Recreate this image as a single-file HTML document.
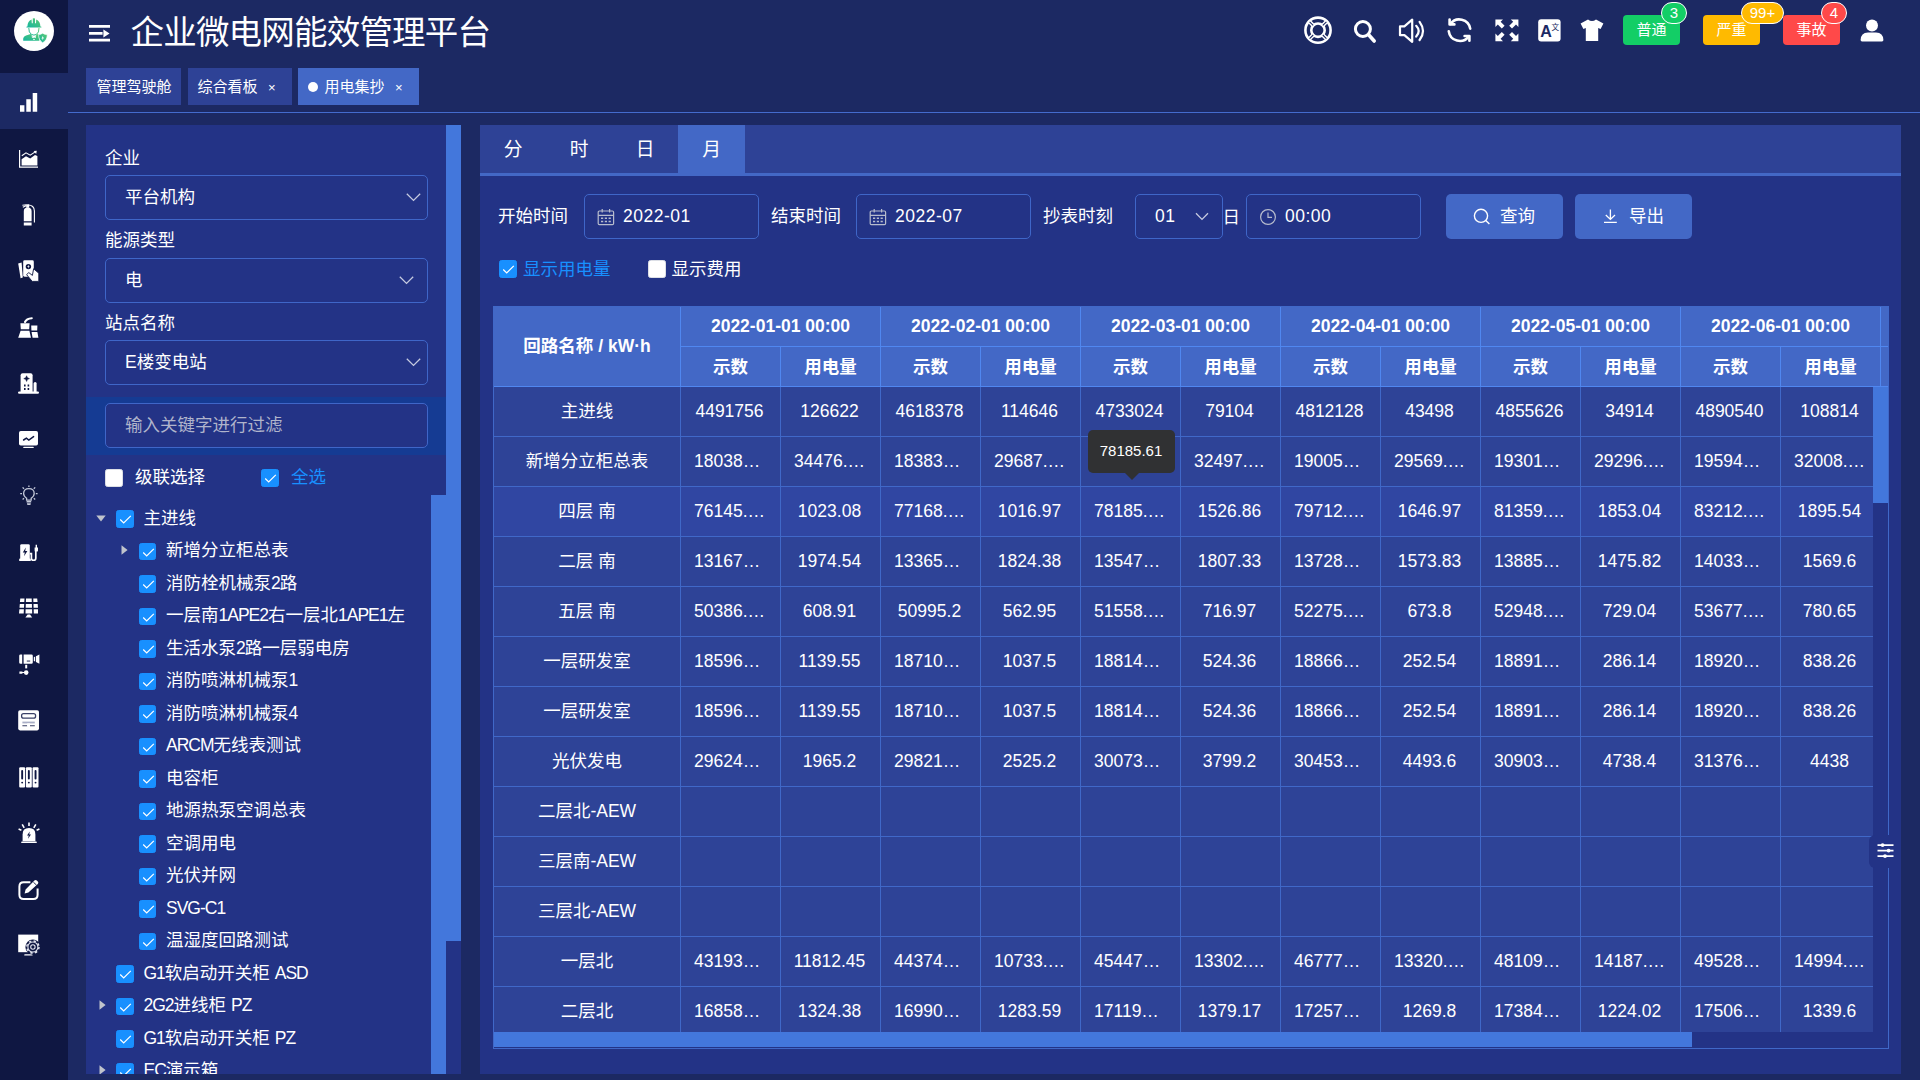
<!DOCTYPE html>
<html lang="zh-CN"><head><meta charset="utf-8"><title>企业微电网能效管理平台</title>
<style>
*{box-sizing:border-box}
html,body{margin:0;padding:0}
body{width:1920px;height:1080px;overflow:hidden;position:relative;background:#1c2963;color:#fff;
 font-family:"Liberation Sans","Noto Sans CJK SC",sans-serif;font-size:17.5px}
svg{display:block}
.sidebar{position:absolute;left:0;top:0;width:68px;height:1080px;background:#0f1742;z-index:5}
.sidebar>svg{position:absolute}
.logo{position:absolute;left:0;top:0;width:68px;height:73px;background:#0f1742}
.logo-c{position:absolute;left:14px;top:11px;width:40px;height:40px;border-radius:50%;background:#fff;overflow:hidden}
.side-act{position:absolute;left:0;top:73px;width:68px;height:56px;background:#1c2963}
.header{position:absolute;left:0;top:0;width:1920px;height:68px}
.header>svg{position:absolute}
.title{position:absolute;left:130.5px;top:1.5px;height:62px;line-height:62px;font-size:33.5px;letter-spacing:-0.8px;white-space:nowrap}
.abtn{position:absolute;top:15px;width:57px;height:30px;border-radius:4px;font-size:15px;line-height:30px;text-align:center;color:#fff}
.badge{position:absolute;top:2px;height:22px;border-radius:11px;border:1px solid #fff;font-size:15px;line-height:20px;text-align:center;color:#fff}
.tags{position:absolute;left:0;top:0;width:1920px;height:114px}
.tag{position:absolute;top:68px;height:37px;background:#2e4296;font-size:15px;line-height:37px;white-space:nowrap}
.tag.on{background:#4368c6}
.tag span{position:absolute;top:0;line-height:38.5px}
.tag i{position:absolute;top:0;font-style:normal;font-size:13px;line-height:40px}
.tag b{position:absolute;left:10px;top:14px;width:10px;height:10px;border-radius:50%;background:#fff}
.tagline{position:absolute;left:68px;top:112px;width:1852px;height:1px;background:#446bcd}

.lp{position:absolute;left:86px;top:125px;width:375px;height:949px;background:#233386;overflow:hidden}
.lbl{position:absolute;left:19px;height:20px;line-height:20px;font-size:17.5px;white-space:nowrap}
.sel{position:absolute;left:19px;width:323px;height:45px;border:1px solid #3f66c8;border-radius:5px;line-height:43px;font-size:17.5px}
.sel span{position:absolute;left:19px;top:0;white-space:nowrap}
.arr{position:absolute;top:17px}
.fband{position:absolute;left:0;top:272px;width:360px;height:58px;background:#153b93}
.finput{position:absolute;left:19px;top:6px;width:323px;height:45px;border:1px solid #3f66c8;border-radius:5px;background:#233386;line-height:43px;padding-left:19px;color:#b0b4cb;font-size:17.5px;white-space:nowrap}
.cb{position:absolute;width:17.5px;height:17.5px;border-radius:2.5px;background:#fff;border:1px solid #dcdfe6;overflow:hidden}
.cb.on{background:#1890ff;border-color:#1890ff}
.cb svg{position:absolute;left:-1px;top:-1px}
.cbl{position:absolute;height:30px;line-height:30px;font-size:17.5px;white-space:nowrap}
.blue{color:#1890ff}
.tree{position:absolute;left:0;top:377.5px;width:345px}
.tn{position:absolute;left:0;width:345px;height:32.5px;line-height:32.5px;font-size:17.5px;white-space:nowrap}
.tn span{position:absolute;top:-1px}
.tn span u{text-decoration:none;letter-spacing:-1px}
.ta{position:absolute;top:12px}
svg.ta[width="7"]{top:9.5px}
.isb{position:absolute;left:345px;top:370px;width:15px;height:579px;background:#4377dc}
.osb{position:absolute;left:360px;top:0;width:15px;height:816px;background:#4377dc}
.osbt{position:absolute;left:446px;top:941px;width:15px;height:133px;background:#233386}

.mp{position:absolute;left:480px;top:125px;width:1421px;height:949px;background:#233386}
.ttabs{position:absolute;left:0;top:0;width:1421px;height:51px;background:#2e4296;border-bottom:3px solid #4368c6}
.tt{position:absolute;top:0;height:48px;line-height:50px;text-align:center;font-size:18.75px}
.tt.on{background:#4368c6}
.flbl{position:absolute;top:69px;height:45px;line-height:45px;font-size:17.5px;white-space:nowrap}
.inp{position:absolute;top:69px;height:45px;border:1px solid #3f66c8;border-radius:5px;line-height:43px;font-size:17.5px}
.inp span{position:absolute;top:0;white-space:nowrap;letter-spacing:.5px}
.inp>svg.ic{position:absolute;left:12px;top:12.5px}
.btn{position:absolute;top:69px;width:117px;height:45px;border-radius:5px;background:#4368c6;line-height:45px;font-size:17.5px}
.btn span{position:absolute;top:0}
.btn svg{position:absolute}

.tbl{position:absolute;left:13px;top:181px;width:1396px;height:743px;border:1px solid #4068c8;overflow:hidden}
.thead{position:absolute;left:0;top:0;width:1600px;height:80px;background:#4368c6}
.th{font-weight:bold;font-size:17.5px;text-align:center;white-space:nowrap;border-right:1px solid #5087f0;border-bottom:1px solid #5087f0;overflow:hidden}
.h0{position:absolute;left:0;top:0;width:187px;height:80px;line-height:78px}
.thg{position:absolute;top:0;width:200px;height:80px}
.h1{width:200px;height:40px;line-height:38px}
.h2{float:left;width:100px;height:40px;line-height:40px}
.tbody{position:absolute;left:0;top:80px;width:1379px;height:645px;overflow:hidden;background:#2e4397}
.tr{width:1600px;height:50px;background:#2e4397}
.tr.hov{background:#3046a2}
.td{float:left;width:100px;height:50px;line-height:48px;text-align:center;white-space:nowrap;overflow:hidden;border-right:1px solid #4068c8;border-bottom:1px solid #4068c8;font-size:17.5px;padding:0 13px 0 11px}
.td.t{padding:0 12px 0 13px}
.td.t{text-align:left}
.td.c0{width:187px;padding:0 12px}
.vsb{position:absolute;left:1379px;top:80px;width:15px;height:660px;background:#233386}
.vsb div{width:15px;height:116px;background:#4377dc}
.hsb{position:absolute;left:0;top:725px;width:1379px;height:15px;background:#233386}
.hsb div{width:1199px;height:15px;background:#4377dc;margin-left:-1px}
.tip{position:absolute;left:608px;top:305px;width:87px;height:43px;border-radius:5px;background:#303133;font-size:15px;line-height:42px;text-align:center;color:#fff;text-indent:-1px}
.tip i{position:absolute;left:36.5px;top:43px;width:0;height:0;border:7.5px solid transparent;border-top-color:#303133;border-bottom-width:0}
.setbtn{position:absolute;left:1389px;top:710px;width:32px;height:33px;border-radius:6px 0 0 6px;background:#233386}
.setbtn svg{position:absolute;left:7.5px;top:8px}

</style></head><body>
<div class="sidebar">
<div class="logo"><div class="logo-c"><svg width="40" height="40" viewBox="0 0 40 40"><defs><linearGradient id="lg" x1="0" y1="1" x2="1" y2="0"><stop offset="0" stop-color="#12b5a0"/><stop offset="1" stop-color="#5fca72"/></linearGradient></defs><path fill="url(#lg)" d="M13.4 15.6Q13.6 10.2 17.6 8.6L17.8 12.2H18.8V7.6Q19.8 7 21 7.6V12.2H22L22.2 8.6Q26.2 10.2 26.4 15.6L27.4 15.8V16.6H12.4V15.8z"/><path fill="none" stroke="url(#lg)" stroke-width="1" d="M14.8 17Q14.6 21.6 17.4 23.4Q19.9 24.8 22.4 23.4Q25.2 21.6 25 17"/><path fill="url(#lg)" d="M9.2 29.8V27.6Q9.4 25.4 12 24.6L16.8 23L19.9 27.6L23 23L25.4 23.8V29.8z"/><path fill="#fff" d="M17.6 24.2L19.2 26.4L18 27zM22.2 24.2L20.6 26.4L21.8 27zM19 28.2h2v0.8h-2z"/><path fill="url(#lg)" stroke="#fff" stroke-width="0.7" d="M28.6 22.2Q30.8 23.6 33.2 23.4Q33.6 29 28.6 31.8Q24.4 29 24.6 23.4Q26.8 23.6 28.6 22.2z"/><path fill="#fff" d="M29.2 24.4L27.4 27.4H28.6L28.2 29.4L30 26.4H28.8z"/></svg></div></div>
<div class="side-act"></div>
<svg style="left:20px;top:93px" width="18" height="19" viewBox="0 0 18 19" ><path fill="#fff" d="M0 12.2h4.4v6.6H0zM6.3 6.2h4.5v12.6H6.3zM12.7 0h4.5v18.8h-4.5z"/></svg>
<svg style="left:19px;top:150px" width="19" height="18" viewBox="0 0 19 18" ><path d="M0.6 0V17.1H19" fill="none" stroke="#fff" stroke-width="1.2"/><path d="M2.6 15.6V9.2L7 6.2l4.2 2.3 4.8-3.4 2.4 0.8v9.7z" fill="#fff"/><path d="M2.8 5.8L7 2.8l4.2 2.4 5.4-3.6" fill="none" stroke="#fff" stroke-width="1.1"/><path d="M14.6 0.9l3.2-0.2-0.6 3.2z" fill="#fff"/></svg>
<svg style="left:22px;top:203.5px" width="14" height="22" viewBox="0 0 14 22" ><path d="M1.8 7.2Q1.8 3.6 5.6 3.6Q9.6 3.6 9.6 7.2V17.2H1.8zM1.8 18.4H9.6V21.4H1.8z" fill="#fff"/><path d="M0.4 1.2L4.6 0.8M0.8 3.2L4.6 1.4M5.4 1C10 0.6 12.4 3.4 12.4 7V18.6" fill="none" stroke="#fff" stroke-width="1.1"/><path d="M4.2 0.4h3v3.4h-3z" fill="#fff"/></svg>
<svg style="left:18px;top:259.5px" width="22" height="22" viewBox="0 0 22 22" ><path d="M0.2 3.4L3.6 2.6L4.8 17.6L2.6 18.2z" fill="#fff"/><rect x="5.2" y="0.3" width="10.6" height="16.4" rx="1.4" fill="#fff"/><circle cx="10.4" cy="6.6" r="2.7" fill="#0f1742"/><path d="M10.9 4.6L9.2 7h1.2l-0.5 1.7L11.7 6.2h-1.2z" fill="#fff"/><path d="M8.6 14.6L10.8 12.6L14.4 15.4L15.6 8.8L20.8 13.2V21.4H14.2z" fill="#fff" stroke="#0f1742" stroke-width="0.9"/></svg>
<svg style="left:18px;top:317px" width="21" height="21.4" viewBox="0 0 21 21.4" ><path d="M2.4 6.2H11.6L11.2 12.2H2.8zM2.6 13.8H11.4L13 20.8H0.2z" fill="#fff"/><path d="M13.2 8.4H19.4L19.2 13.4H13.4zM13.6 15H19.4L20.4 20.8H14.6L13.8 16.6z" fill="#fff"/><path d="M7 5Q8.4 1.6 13.8 1.2" fill="none" stroke="#fff" stroke-width="2.1" stroke-linecap="round"/></svg>
<svg style="left:18px;top:373px" width="21" height="21" viewBox="0 0 21 21" ><path d="M2.6 2.2Q2.6 0.2 4.6 0.2H12.6Q14.6 0.2 14.6 2.2V19H2.6z" fill="#fff"/><path d="M15.6 10.6Q15.6 9 17.1 9Q18.6 9 18.6 10.6V19H15.6z" fill="#fff"/><rect x="0" y="18.4" width="21" height="2.4" rx="1.2" fill="#fff"/><path d="M8.6 2.8Q8.9 5.3 11.4 5.6Q8.9 5.9 8.6 8.4Q8.3 5.9 5.8 5.6Q8.3 5.3 8.6 2.8z" fill="#0f1742" stroke="#0f1742" stroke-width="0.6"/><path d="M6 11.6h1.6v2H6zM9.6 11.6h1.6v2H9.6zM6 15h1.6v2H6zM9.6 15h1.6v2H9.6z" fill="#0f1742"/></svg>
<svg style="left:19px;top:431px" width="19" height="17.4" viewBox="0 0 19 17.4" ><rect x="0" y="0" width="19" height="14.6" rx="1.8" fill="#fff"/><path d="M4.6 9L7.4 7.2L9.8 9L14.6 5.6" fill="none" stroke="#0f1742" stroke-width="1.5" stroke-linecap="round"/><rect x="4.2" y="15.8" width="10.6" height="1.3" rx="0.65" fill="#fff"/></svg>
<svg style="left:19.5px;top:485px" width="18" height="21" viewBox="0 0 18 21" ><g fill="none" stroke="#c3c8d8" stroke-width="1.3"><path d="M6.6 15.2V13.2Q3.6 11.4 3.6 8.6Q3.6 3.6 8.9 3.6Q14.2 3.6 14.2 8.6Q14.2 11.4 11.2 13.2V15.2z"/><path d="M8.9 0.4V2M0.2 8.6H2M15.8 8.6H17.6M2.6 2.4L4 3.8M15.2 2.4L13.8 3.8M2.6 14.4L4 13.2M15.2 14.4L13.8 13.2"/></g><path d="M6.6 16H11.2V17.4H6.6zM7 18.2H10.8V19.4Q8.9 20.6 7 19.4z" fill="#c3c8d8"/></svg>
<svg style="left:18.5px;top:543.6px" width="20" height="17.8" viewBox="0 0 20 17.8" ><path d="M1.2 1.6Q1.2 0.2 2.6 0.2H9.4Q10.8 0.2 10.8 1.6V15H1.2z" fill="#fff"/><rect x="0.2" y="14.6" width="11.6" height="2.8" rx="0.8" fill="#fff"/><path d="M6.8 3.6L3.8 8.6H5.8L5 12.2L8.4 7H6.2z" fill="#0f1742"/><path d="M10.8 9.6H12.4V14.2Q12.4 16.4 14.6 16.4Q16.8 16.4 16.8 14.2V7" fill="none" stroke="#fff" stroke-width="1.7"/><path d="M15.6 3.4H19V6.4Q19 7.6 17.8 7.6H16.8Q15.6 7.6 15.6 6.4zM16.6 0.8h1.4v3h-1.4z" fill="#fff"/></svg>
<svg style="left:19px;top:598.4px" width="19.4" height="19.8" viewBox="0 0 19.4 19.8" ><path d="M1.3 0.5H5.5L5.3 4.1H0.9zM7 0.5H12.7L12.8 4.1H6.9zM14.3 0.5H18.2L18.6 4.1H14.4z" fill="#fff"/><path d="M0.8 5.9H5.2L5 9.7H0.5zM6.8 5.9H12.9L13 9.7H6.7zM14.5 5.9H18.7L19 9.7H14.6z" fill="#fff"/><path d="M0.4 11.3H4.9L4.7 15.5H0zM6.6 11.3H13.1L13.2 15.5H6.5zM14.7 11.3H19.1L19.4 15.5H14.8z" fill="#fff"/><path d="M8.6 16.6H11L13.2 19.4H6.4z" fill="#fff"/></svg>
<svg style="left:18.5px;top:653.8px" width="21" height="22" viewBox="0 0 21 22" ><path d="M1.6 0.4H3.2V9.8H1.6Q0.2 9.8 0.2 8.4V1.8Q0.2 0.4 1.6 0.4zM4.6 0.4H12.4Q13.8 0.4 13.8 1.8V8.4Q13.8 9.8 12.4 9.8H4.6z" fill="#fff"/><path d="M14.8 3.2L16.2 2.6V7.6L14.8 7zM17 2.2L20.4 0.4V9.8L17 8z" fill="#fff"/><rect x="7.8" y="6.6" width="3.4" height="0.9" fill="#0f1742"/><path d="M6.2 10.8h2v3.6h-2z" fill="#fff"/><circle cx="7.2" cy="18.6" r="2.3" fill="#fff"/><path d="M0.4 17.4H3.4V19.8H0.4zM3.4 18.1h2v1h-2z" fill="#fff"/></svg>
<svg style="left:18px;top:710.3px" width="21.2" height="20.6" viewBox="0 0 21.2 20.6" ><rect x="0.2" y="0.2" width="20.8" height="20.2" rx="1.8" fill="#fff"/><rect x="3.6" y="3.6" width="14" height="4.6" rx="2" fill="#fff" stroke="#3b4268" stroke-width="1.3"/><path d="M4.4 11.6H16.8V13.4H4.4z" fill="#a9aec6"/><path d="M4.4 15.2H9.2V16.2H4.4zM12 15.2H16.8V16.2H12z" fill="#3b4268"/><path d="M9.2 13.4H12V16.2H9.2z" fill="#fff"/></svg>
<svg style="left:18.6px;top:766.8px" width="20" height="21" viewBox="0 0 20 21" ><rect x="0.2" y="0.2" width="5.9" height="20.4" rx="1" fill="#fff"/><rect x="2.2" y="3" width="1.9" height="9.4" rx="0.9" fill="#0f1742"/><circle cx="3.1500000000000004" cy="15.6" r="0.95" fill="#0f1742"/><rect x="6.9" y="0.2" width="5.9" height="20.4" rx="1" fill="#fff"/><rect x="8.9" y="3" width="1.9" height="9.4" rx="0.9" fill="#0f1742"/><circle cx="9.850000000000001" cy="15.6" r="0.95" fill="#0f1742"/><rect x="13.6" y="0.2" width="5.9" height="20.4" rx="1" fill="#fff"/><rect x="15.6" y="3" width="1.9" height="9.4" rx="0.9" fill="#0f1742"/><circle cx="16.55" cy="15.6" r="0.95" fill="#0f1742"/></svg>
<svg style="left:17.6px;top:822.4px" width="22" height="22" viewBox="0 0 22 22" ><path d="M4.6 19.2V12.4Q4.6 6 11 6Q17.4 6 17.4 12.4V19.2z" fill="#fff"/><rect x="3.2" y="19.6" width="15.6" height="1.5" rx="0.7" fill="#fff"/><path d="M11.8 9.4L9 13.6H10.8L10 16.8L13 12.4H11.2z" fill="#0f1742"/><path d="M11 0.4V4M4.2 2.4L6.2 5.8M17.8 2.4L15.8 5.8M0.6 7L3.4 8.2M21.4 7L18.6 8.2" fill="none" stroke="#fff" stroke-width="1.6"/></svg>
<svg style="left:17.6px;top:879px" width="22" height="22" viewBox="0 0 22 22" ><path d="M12.4 3.2H5.6Q1.4 3.2 1.4 7.4V15.8Q1.4 20 5.6 20H15.4Q19.6 20 19.6 15.8V9.6" fill="none" stroke="#fff" stroke-width="2"/><path d="M16.4 1.6Q17.6 0.4 18.8 1.6L19.8 2.6Q21 3.8 19.8 5L10.4 13.4L6.6 14.4L7.6 10.4z" fill="#fff"/><path d="M15.4 3.2L18.6 6.2" stroke="#0f1742" stroke-width="0.9"/></svg>
<svg style="left:17.8px;top:934.4px" width="22" height="22.4" viewBox="0 0 22 22.4" ><path d="M0.2 0.6H20.2V18.2H0.2z" fill="#fff"/><rect x="6.2" y="20.2" width="8.4" height="1.4" rx="0.7" fill="#fff"/><circle cx="14.9" cy="13" r="7.5" fill="#0f1742"/><circle cx="14.9" cy="13" r="6.1" fill="none" stroke="#e4e6f0" stroke-width="1.5" stroke-dasharray="2.4 2.39"/><circle cx="14.9" cy="13" r="5" fill="none" stroke="#e4e6f0" stroke-width="1.1"/><circle cx="14.9" cy="13" r="2.2" fill="none" stroke="#e4e6f0" stroke-width="1.1"/></svg>
</div>
<div class="header">
<svg style="left:89px;top:25px" width="21.4" height="16.8" viewBox="0 0 21.4 16.8" ><path fill="#fff" d="M0 0H21.2V2.8H0zM0 6.9H13.6V9.8H0zM0 13.8H21.2V16.6H0zM14.4 4.4L20.6 8.4L14.4 12.4z"/></svg>
<div class="title">企业微电网能效管理平台</div>
<svg style="left:1303px;top:15px" width="30" height="30" viewBox="0 0 30 30" ><g fill="none" stroke="#fff" stroke-width="2.6"><circle cx="15" cy="15.2" r="12.6"/><circle cx="15" cy="15.2" r="6.7"/><path d="M6 6.2L10.4 10.6M24 6.2L19.6 10.6M6 24.2L10.4 19.8M24 24.2L19.6 19.8" stroke-width="4"/></g><path d="M6.6 6.8L10.2 10.4M23.4 6.8L19.8 10.4M6.6 23.6L10.2 20M23.4 23.6L19.8 20" stroke="#1c2963" stroke-width="1.1" fill="none"/></svg>
<svg style="left:1352px;top:18px" width="26" height="26" viewBox="0 0 26 26" ><circle cx="10.9" cy="11" r="7.5" fill="none" stroke="#fff" stroke-width="3"/><path d="M16.6 16.8L22.2 23" stroke="#fff" stroke-width="3.6" stroke-linecap="round"/></svg>
<svg style="left:1397px;top:17px" width="29" height="27" viewBox="0 0 29 27" ><g fill="none" stroke="#fff" stroke-width="2.2" stroke-linejoin="round" stroke-linecap="round"><path d="M3 9.4H7.4L15.2 2.6V24.8L7.4 18.2H3z"/><path d="M19.2 8.8Q24.2 14 19.2 19.6"/><path d="M22.6 4.8Q29.4 14 22.6 23"/></g></svg>
<svg style="left:1446px;top:17px" width="27" height="26" viewBox="0 0 27 26" ><g fill="none" stroke="#fff" stroke-width="2.6" stroke-linecap="round" stroke-linejoin="round"><path d="M24.2 11.6A11 11 0 0 0 4.4 7"/><path d="M2.8 14.4A11 11 0 0 0 22.6 19.4"/><path d="M3.6 2.6V7.4H8.4"/><path d="M23.4 23.8V19H18.6"/></g></svg>
<svg style="left:1494.6px;top:18.8px" width="24" height="23" viewBox="0 0 24 23" ><path fill="#fff" d="M0.4 0.4H8L5.6 2.8L9.6 6.8L6.8 9.6L2.8 5.6L0.4 8zM23.4 0.4V8L21 5.6L17 9.6L14.2 6.8L18.2 2.8L15.8 0.4zM0.4 22.2V14.6L2.8 17L6.8 13L9.6 15.8L5.6 19.8L8 22.2zM23.4 22.2H15.8L18.2 19.8L14.2 15.8L17 13L21 17L23.4 14.6z"/></svg>
<svg style="left:1537.6px;top:18.8px" width="23" height="23" viewBox="0 0 23 23" ><rect x="0.2" y="0.2" width="22.4" height="22.2" rx="3" fill="#fff"/><text x="2.2" y="18.4" font-family="Liberation Sans,sans-serif" font-weight="bold" font-size="16" fill="#1c2963">A</text><text x="13.4" y="11.4" font-family="Liberation Sans,Noto Sans CJK SC,sans-serif" font-size="7.6" fill="#1c2963">文</text></svg>
<svg style="left:1579.6px;top:18.8px" width="24" height="23" viewBox="0 0 24 23" ><path fill="#fff" d="M8 0.6Q12 3.6 16 0.6L23.4 4.6L20.6 10L18.2 9V22H5.8V9L3.4 10L0.6 4.6z"/></svg>
<div class="abtn" style="left:1623px;background:#13ce66">普通</div><div class="badge" style="left:1661px;width:26px;background:#13ce66">3</div>
<div class="abtn" style="left:1703px;background:#ffba00">严重</div><div class="badge" style="left:1741px;width:43px;background:#ffba00">99+</div>
<div class="abtn" style="left:1783px;background:#ff4949">事故</div><div class="badge" style="left:1821px;width:26px;background:#ff4949">4</div>
<svg style="left:1859.6px;top:18.6px" width="24" height="23" viewBox="0 0 24 23" ><circle cx="12" cy="6.6" r="6" fill="#fff"/><path fill="#fff" d="M0.6 21Q0.8 14 8 13.6H16Q23.2 14 23.4 21Q23.4 22.4 22 22.4H2Q0.6 22.4 0.6 21z"/></svg>
</div>
<div class="tags">
<div class="tag" style="left:86px;width:95px"><span style="left:10.5px">管理驾驶舱</span></div>
<div class="tag" style="left:188px;width:104px"><span style="left:9.5px">综合看板</span><i style="left:80px">×</i></div>
<div class="tag on" style="left:298px;width:121px"><b></b><span style="left:26.5px">用电集抄</span><i style="left:97px">×</i></div>
<div class="tagline"></div>
</div>
<div class="lp">
<div class="lbl" style="top:23px">企业</div>
<div class="sel" style="top:50px"><span>平台机构</span><svg class="arr" style="left:300px" width="15" height="9" viewBox="0 0 15 9"><path d="M0.8 0.8 L7.5 7.4 L14.2 0.8" fill="none" stroke="#c6cbe0" stroke-width="1.3"/></svg></div>
<div class="lbl" style="top:105px">能源类型</div>
<div class="sel" style="top:133px"><span>电</span><svg class="arr" style="left:293px" width="15" height="9" viewBox="0 0 15 9"><path d="M0.8 0.8 L7.5 7.4 L14.2 0.8" fill="none" stroke="#c6cbe0" stroke-width="1.3"/></svg></div>
<div class="lbl" style="top:188px">站点名称</div>
<div class="sel" style="top:215px"><span>E楼变电站</span><svg class="arr" style="left:300px" width="15" height="9" viewBox="0 0 15 9"><path d="M0.8 0.8 L7.5 7.4 L14.2 0.8" fill="none" stroke="#c6cbe0" stroke-width="1.3"/></svg></div>
<div class="fband"><div class="finput">输入关键字进行过滤</div></div>
<div class="cb " style="left:19px;top:344px"></div>
<div class="cbl" style="left:49px;top:337px">级联选择</div>
<div class="cb on " style="left:175px;top:344px"><svg width="18" height="18" viewBox="0 0 18 18"><path d="M4.2 9.5 L7.7 12.9 L14.8 5.9" fill="none" stroke="#fff" stroke-width="1.25"/></svg></div>
<div class="cbl blue" style="left:205px;top:337px">全选</div>
<div class="tree">
<div class="tn" style="top:0.0px"><svg class="ta" style="left:9.8px" width="10" height="7" viewBox="0 0 10 7"><path d="M0.3 0.5 L9.7 0.5 L5 6.6z" fill="#c0c4cc"/></svg><div class="cb on tcb" style="left:30.0px;top:7.5px"><svg width="18" height="18" viewBox="0 0 18 18"><path d="M4.2 9.5 L7.7 12.9 L14.8 5.9" fill="none" stroke="#fff" stroke-width="1.25"/></svg></div><span style="left:57.5px">主进线</span></div>
<div class="tn" style="top:32.5px"><svg class="ta" style="left:35.3px" width="7" height="10" viewBox="0 0 7 10"><path d="M0.5 0.3 L0.5 9.7 L6.6 5z" fill="#c0c4cc"/></svg><div class="cb on tcb" style="left:52.5px;top:7.5px"><svg width="18" height="18" viewBox="0 0 18 18"><path d="M4.2 9.5 L7.7 12.9 L14.8 5.9" fill="none" stroke="#fff" stroke-width="1.25"/></svg></div><span style="left:80.0px">新增分立柜总表</span></div>
<div class="tn" style="top:65.0px"><div class="cb on tcb" style="left:52.5px;top:7.5px"><svg width="18" height="18" viewBox="0 0 18 18"><path d="M4.2 9.5 L7.7 12.9 L14.8 5.9" fill="none" stroke="#fff" stroke-width="1.25"/></svg></div><span style="left:80.0px">消防栓机械泵<u>2</u>路</span></div>
<div class="tn" style="top:97.5px"><div class="cb on tcb" style="left:52.5px;top:7.5px"><svg width="18" height="18" viewBox="0 0 18 18"><path d="M4.2 9.5 L7.7 12.9 L14.8 5.9" fill="none" stroke="#fff" stroke-width="1.25"/></svg></div><span style="left:80.0px">一层南<u>1APE2</u>右一层北<u>1APE1</u>左</span></div>
<div class="tn" style="top:130.0px"><div class="cb on tcb" style="left:52.5px;top:7.5px"><svg width="18" height="18" viewBox="0 0 18 18"><path d="M4.2 9.5 L7.7 12.9 L14.8 5.9" fill="none" stroke="#fff" stroke-width="1.25"/></svg></div><span style="left:80.0px">生活水泵<u>2</u>路一层弱电房</span></div>
<div class="tn" style="top:162.5px"><div class="cb on tcb" style="left:52.5px;top:7.5px"><svg width="18" height="18" viewBox="0 0 18 18"><path d="M4.2 9.5 L7.7 12.9 L14.8 5.9" fill="none" stroke="#fff" stroke-width="1.25"/></svg></div><span style="left:80.0px">消防喷淋机械泵<u>1</u></span></div>
<div class="tn" style="top:195.0px"><div class="cb on tcb" style="left:52.5px;top:7.5px"><svg width="18" height="18" viewBox="0 0 18 18"><path d="M4.2 9.5 L7.7 12.9 L14.8 5.9" fill="none" stroke="#fff" stroke-width="1.25"/></svg></div><span style="left:80.0px">消防喷淋机械泵<u>4</u></span></div>
<div class="tn" style="top:227.5px"><div class="cb on tcb" style="left:52.5px;top:7.5px"><svg width="18" height="18" viewBox="0 0 18 18"><path d="M4.2 9.5 L7.7 12.9 L14.8 5.9" fill="none" stroke="#fff" stroke-width="1.25"/></svg></div><span style="left:80.0px"><u>ARCM</u>无线表测试</span></div>
<div class="tn" style="top:260.0px"><div class="cb on tcb" style="left:52.5px;top:7.5px"><svg width="18" height="18" viewBox="0 0 18 18"><path d="M4.2 9.5 L7.7 12.9 L14.8 5.9" fill="none" stroke="#fff" stroke-width="1.25"/></svg></div><span style="left:80.0px">电容柜</span></div>
<div class="tn" style="top:292.5px"><div class="cb on tcb" style="left:52.5px;top:7.5px"><svg width="18" height="18" viewBox="0 0 18 18"><path d="M4.2 9.5 L7.7 12.9 L14.8 5.9" fill="none" stroke="#fff" stroke-width="1.25"/></svg></div><span style="left:80.0px">地源热泵空调总表</span></div>
<div class="tn" style="top:325.0px"><div class="cb on tcb" style="left:52.5px;top:7.5px"><svg width="18" height="18" viewBox="0 0 18 18"><path d="M4.2 9.5 L7.7 12.9 L14.8 5.9" fill="none" stroke="#fff" stroke-width="1.25"/></svg></div><span style="left:80.0px">空调用电</span></div>
<div class="tn" style="top:357.5px"><div class="cb on tcb" style="left:52.5px;top:7.5px"><svg width="18" height="18" viewBox="0 0 18 18"><path d="M4.2 9.5 L7.7 12.9 L14.8 5.9" fill="none" stroke="#fff" stroke-width="1.25"/></svg></div><span style="left:80.0px">光伏并网</span></div>
<div class="tn" style="top:390.0px"><div class="cb on tcb" style="left:52.5px;top:7.5px"><svg width="18" height="18" viewBox="0 0 18 18"><path d="M4.2 9.5 L7.7 12.9 L14.8 5.9" fill="none" stroke="#fff" stroke-width="1.25"/></svg></div><span style="left:80.0px"><u>SVG-C1</u></span></div>
<div class="tn" style="top:422.5px"><div class="cb on tcb" style="left:52.5px;top:7.5px"><svg width="18" height="18" viewBox="0 0 18 18"><path d="M4.2 9.5 L7.7 12.9 L14.8 5.9" fill="none" stroke="#fff" stroke-width="1.25"/></svg></div><span style="left:80.0px">温湿度回路测试</span></div>
<div class="tn" style="top:455.0px"><div class="cb on tcb" style="left:30.0px;top:7.5px"><svg width="18" height="18" viewBox="0 0 18 18"><path d="M4.2 9.5 L7.7 12.9 L14.8 5.9" fill="none" stroke="#fff" stroke-width="1.25"/></svg></div><span style="left:57.5px"><u>G1</u>软启动开关柜 <u>ASD</u></span></div>
<div class="tn" style="top:487.5px"><svg class="ta" style="left:12.8px" width="7" height="10" viewBox="0 0 7 10"><path d="M0.5 0.3 L0.5 9.7 L6.6 5z" fill="#c0c4cc"/></svg><div class="cb on tcb" style="left:30.0px;top:7.5px"><svg width="18" height="18" viewBox="0 0 18 18"><path d="M4.2 9.5 L7.7 12.9 L14.8 5.9" fill="none" stroke="#fff" stroke-width="1.25"/></svg></div><span style="left:57.5px"><u>2G2</u>进线柜 <u>PZ</u></span></div>
<div class="tn" style="top:520.0px"><div class="cb on tcb" style="left:30.0px;top:7.5px"><svg width="18" height="18" viewBox="0 0 18 18"><path d="M4.2 9.5 L7.7 12.9 L14.8 5.9" fill="none" stroke="#fff" stroke-width="1.25"/></svg></div><span style="left:57.5px"><u>G1</u>软启动开关柜 <u>PZ</u></span></div>
<div class="tn" style="top:552.5px"><svg class="ta" style="left:12.8px" width="7" height="10" viewBox="0 0 7 10"><path d="M0.5 0.3 L0.5 9.7 L6.6 5z" fill="#c0c4cc"/></svg><div class="cb on tcb" style="left:30.0px;top:7.5px"><svg width="18" height="18" viewBox="0 0 18 18"><path d="M4.2 9.5 L7.7 12.9 L14.8 5.9" fill="none" stroke="#fff" stroke-width="1.25"/></svg></div><span style="left:57.5px"><u>EC</u>演示箱</span></div>
</div>
<div class="isb"></div>
<div class="osb"></div>
</div>
<div class="mp">
<div class="ttabs"><div class="tt" style="left:0;width:66px">分</div><div class="tt" style="left:66px;width:66px">时</div><div class="tt" style="left:132px;width:66px">日</div><div class="tt on" style="left:198px;width:67px">月</div></div>
<div class="flbl" style="left:18px">开始时间</div>
<div class="inp" style="left:104px;width:175px"><svg class="ic" width="18" height="18" viewBox="0 0 18 18"><g fill="none" stroke="#b7bccd" stroke-width="1.2"><rect x="1.2" y="3" width="15.4" height="13.6" rx="1.2"/><path d="M1.2 7.4H16.6M5.2 1V4.6M12.6 1V4.6"/></g><path fill="#b7bccd" d="M4 9.6h2.2v1.5H4zM7.8 9.6H10v1.5H7.8zM11.6 9.6h2.2v1.5h-2.2zM4 12.8h2.2v1.5H4zM7.8 12.8H10v1.5H7.8zM11.6 12.8h2.2v1.5h-2.2z"/></svg><span style="left:38px">2022-01</span></div>
<div class="flbl" style="left:291px">结束时间</div>
<div class="inp" style="left:376px;width:175px"><svg class="ic" width="18" height="18" viewBox="0 0 18 18"><g fill="none" stroke="#b7bccd" stroke-width="1.2"><rect x="1.2" y="3" width="15.4" height="13.6" rx="1.2"/><path d="M1.2 7.4H16.6M5.2 1V4.6M12.6 1V4.6"/></g><path fill="#b7bccd" d="M4 9.6h2.2v1.5H4zM7.8 9.6H10v1.5H7.8zM11.6 9.6h2.2v1.5h-2.2zM4 12.8h2.2v1.5H4zM7.8 12.8H10v1.5H7.8zM11.6 12.8h2.2v1.5h-2.2z"/></svg><span style="left:38px">2022-07</span></div>
<div class="flbl" style="left:563px">抄表时刻</div>
<div class="inp" style="left:655px;width:88px"><span style="left:19px">01</span><svg class="arr" style="left:59px;top:17px" width="14" height="9" viewBox="0 0 14 9"><path d="M1 1.2 L7 7.4 L13 1.2" fill="none" stroke="#c6cbe0" stroke-width="1.3"/></svg></div>
<div class="flbl" style="left:742.5px;top:70px">日</div>
<div class="inp" style="left:766px;width:175px"><svg class="ic" width="18" height="18" viewBox="0 0 18 18"><g fill="none" stroke="#b7bccd" stroke-width="1.2"><circle cx="9" cy="9" r="7.4"/><path d="M9 4.6V9.4H13"/></g></svg><span style="left:38px">00:00</span></div>
<div class="btn" style="left:966px"><svg style="left:27px;top:14px" width="18" height="18" viewBox="0 0 18 18"><g fill="none" stroke="#fff" stroke-width="1.4"><circle cx="8" cy="7.8" r="6.6"/><path d="M12.8 12.4L16.4 16"/></g></svg><span style="left:54px">查询</span></div>
<div class="btn" style="left:1095px"><svg style="left:27px;top:14px" width="18" height="18" viewBox="0 0 18 18"><g fill="none" stroke="#fff" stroke-width="1.3"><path d="M8.4 1.4V11.2M3.8 7L8.4 11.4L13 7M2 14.4H14.8"/></g></svg><span style="left:54px">导出</span></div>
<div class="cb on " style="left:19px;top:135px"><svg width="18" height="18" viewBox="0 0 18 18"><path d="M4.2 9.5 L7.7 12.9 L14.8 5.9" fill="none" stroke="#fff" stroke-width="1.25"/></svg></div>
<div class="cbl blue" style="left:43px;top:129px">显示用电量</div>
<div class="cb " style="left:168px;top:135px"></div>
<div class="cbl" style="left:191.5px;top:129px">显示费用</div>
<div class="tbl">
<div class="thead"><div class="th h0">回路名称 / kW·h</div>
<div class="thg" style="left:187px"><div class="th h1">2022-01-01 00:00</div><div class="th h2">示数</div><div class="th h2">用电量</div></div>
<div class="thg" style="left:387px"><div class="th h1">2022-02-01 00:00</div><div class="th h2">示数</div><div class="th h2">用电量</div></div>
<div class="thg" style="left:587px"><div class="th h1">2022-03-01 00:00</div><div class="th h2">示数</div><div class="th h2">用电量</div></div>
<div class="thg" style="left:787px"><div class="th h1">2022-04-01 00:00</div><div class="th h2">示数</div><div class="th h2">用电量</div></div>
<div class="thg" style="left:987px"><div class="th h1">2022-05-01 00:00</div><div class="th h2">示数</div><div class="th h2">用电量</div></div>
<div class="thg" style="left:1187px"><div class="th h1">2022-06-01 00:00</div><div class="th h2">示数</div><div class="th h2">用电量</div></div>
<div class="thg" style="left:1387px"><div class="th h1">2022-07-01 00:00</div><div class="th h2">示数</div><div class="th h2">用电量</div></div>
</div>
<div class="tbody">
<div class="tr">
<div class="td c0">主进线</div>
<div class="td">4491756</div>
<div class="td">126622</div>
<div class="td">4618378</div>
<div class="td">114646</div>
<div class="td">4733024</div>
<div class="td">79104</div>
<div class="td">4812128</div>
<div class="td">43498</div>
<div class="td">4855626</div>
<div class="td">34914</div>
<div class="td">4890540</div>
<div class="td">108814</div>
<div class="td"></div>
<div class="td"></div>
</div>
<div class="tr">
<div class="td c0">新增分立柜总表</div>
<div class="td t">18038…</div>
<div class="td t">34476.…</div>
<div class="td t">18383…</div>
<div class="td t">29687.…</div>
<div class="td t">18680…</div>
<div class="td t">32497.…</div>
<div class="td t">19005…</div>
<div class="td t">29569.…</div>
<div class="td t">19301…</div>
<div class="td t">29296.…</div>
<div class="td t">19594…</div>
<div class="td t">32008.…</div>
<div class="td"></div>
<div class="td"></div>
</div>
<div class="tr hov">
<div class="td c0">四层 南</div>
<div class="td t">76145.…</div>
<div class="td">1023.08</div>
<div class="td t">77168.…</div>
<div class="td">1016.97</div>
<div class="td t">78185.…</div>
<div class="td">1526.86</div>
<div class="td t">79712.…</div>
<div class="td">1646.97</div>
<div class="td t">81359.…</div>
<div class="td">1853.04</div>
<div class="td t">83212.…</div>
<div class="td">1895.54</div>
<div class="td"></div>
<div class="td"></div>
</div>
<div class="tr">
<div class="td c0">二层 南</div>
<div class="td t">13167…</div>
<div class="td">1974.54</div>
<div class="td t">13365…</div>
<div class="td">1824.38</div>
<div class="td t">13547…</div>
<div class="td">1807.33</div>
<div class="td t">13728…</div>
<div class="td">1573.83</div>
<div class="td t">13885…</div>
<div class="td">1475.82</div>
<div class="td t">14033…</div>
<div class="td">1569.6</div>
<div class="td"></div>
<div class="td"></div>
</div>
<div class="tr">
<div class="td c0">五层 南</div>
<div class="td t">50386.…</div>
<div class="td">608.91</div>
<div class="td">50995.2</div>
<div class="td">562.95</div>
<div class="td t">51558.…</div>
<div class="td">716.97</div>
<div class="td t">52275.…</div>
<div class="td">673.8</div>
<div class="td t">52948.…</div>
<div class="td">729.04</div>
<div class="td t">53677.…</div>
<div class="td">780.65</div>
<div class="td"></div>
<div class="td"></div>
</div>
<div class="tr">
<div class="td c0">一层研发室</div>
<div class="td t">18596…</div>
<div class="td">1139.55</div>
<div class="td t">18710…</div>
<div class="td">1037.5</div>
<div class="td t">18814…</div>
<div class="td">524.36</div>
<div class="td t">18866…</div>
<div class="td">252.54</div>
<div class="td t">18891…</div>
<div class="td">286.14</div>
<div class="td t">18920…</div>
<div class="td">838.26</div>
<div class="td"></div>
<div class="td"></div>
</div>
<div class="tr">
<div class="td c0">一层研发室</div>
<div class="td t">18596…</div>
<div class="td">1139.55</div>
<div class="td t">18710…</div>
<div class="td">1037.5</div>
<div class="td t">18814…</div>
<div class="td">524.36</div>
<div class="td t">18866…</div>
<div class="td">252.54</div>
<div class="td t">18891…</div>
<div class="td">286.14</div>
<div class="td t">18920…</div>
<div class="td">838.26</div>
<div class="td"></div>
<div class="td"></div>
</div>
<div class="tr">
<div class="td c0">光伏发电</div>
<div class="td t">29624…</div>
<div class="td">1965.2</div>
<div class="td t">29821…</div>
<div class="td">2525.2</div>
<div class="td t">30073…</div>
<div class="td">3799.2</div>
<div class="td t">30453…</div>
<div class="td">4493.6</div>
<div class="td t">30903…</div>
<div class="td">4738.4</div>
<div class="td t">31376…</div>
<div class="td">4438</div>
<div class="td"></div>
<div class="td"></div>
</div>
<div class="tr">
<div class="td c0">二层北-AEW</div>
<div class="td"></div>
<div class="td"></div>
<div class="td"></div>
<div class="td"></div>
<div class="td"></div>
<div class="td"></div>
<div class="td"></div>
<div class="td"></div>
<div class="td"></div>
<div class="td"></div>
<div class="td"></div>
<div class="td"></div>
<div class="td"></div>
<div class="td"></div>
</div>
<div class="tr">
<div class="td c0">三层南-AEW</div>
<div class="td"></div>
<div class="td"></div>
<div class="td"></div>
<div class="td"></div>
<div class="td"></div>
<div class="td"></div>
<div class="td"></div>
<div class="td"></div>
<div class="td"></div>
<div class="td"></div>
<div class="td"></div>
<div class="td"></div>
<div class="td"></div>
<div class="td"></div>
</div>
<div class="tr">
<div class="td c0">三层北-AEW</div>
<div class="td"></div>
<div class="td"></div>
<div class="td"></div>
<div class="td"></div>
<div class="td"></div>
<div class="td"></div>
<div class="td"></div>
<div class="td"></div>
<div class="td"></div>
<div class="td"></div>
<div class="td"></div>
<div class="td"></div>
<div class="td"></div>
<div class="td"></div>
</div>
<div class="tr">
<div class="td c0">一层北</div>
<div class="td t">43193…</div>
<div class="td">11812.45</div>
<div class="td t">44374…</div>
<div class="td t">10733.…</div>
<div class="td t">45447…</div>
<div class="td t">13302.…</div>
<div class="td t">46777…</div>
<div class="td t">13320.…</div>
<div class="td t">48109…</div>
<div class="td t">14187.…</div>
<div class="td t">49528…</div>
<div class="td t">14994.…</div>
<div class="td"></div>
<div class="td"></div>
</div>
<div class="tr">
<div class="td c0">二层北</div>
<div class="td t">16858…</div>
<div class="td">1324.38</div>
<div class="td t">16990…</div>
<div class="td">1283.59</div>
<div class="td t">17119…</div>
<div class="td">1379.17</div>
<div class="td t">17257…</div>
<div class="td">1269.8</div>
<div class="td t">17384…</div>
<div class="td">1224.02</div>
<div class="td t">17506…</div>
<div class="td">1339.6</div>
<div class="td"></div>
<div class="td"></div>
</div>
</div>
<div class="vsb"><div></div></div><div class="hsb"><div></div></div>
</div>
<div class="tip">78185.61<i></i></div>
<div class="setbtn"><svg width="17" height="15" viewBox="0 0 17 15"><path d="M0.5 2.1H16.5M0.5 7.6H16.5M0.5 13.1H16.5" stroke="#fff" stroke-width="1.9"/><circle cx="5.6" cy="2.1" r="1.9" fill="#fff"/><circle cx="11.6" cy="7.6" r="1.9" fill="#fff"/><circle cx="8" cy="13.1" r="1.9" fill="#fff"/></svg></div>
</div>
</body></html>
